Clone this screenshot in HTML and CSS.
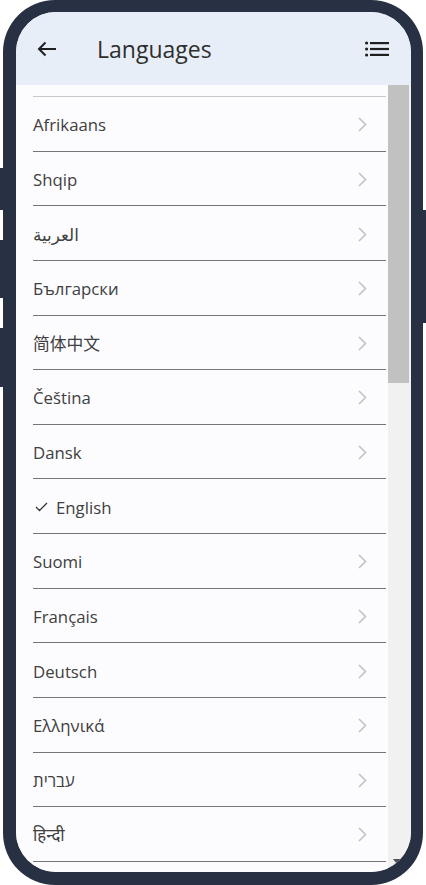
FILE: index.html
```html
<!DOCTYPE html>
<html lang="en">
<head>
<meta charset="utf-8">
<title>Languages</title>
<link rel="stylesheet" href="styles.css">
</head>
<body>
<div class="device">
  <span class="btn btn-l1"></span>
  <span class="btn btn-l2"></span>
  <span class="btn btn-l3"></span>
  <span class="btn btn-r1"></span>
  <div class="screen">
    <header class="topbar">
      <svg class="back" width="20" height="16" viewBox="0 0 20 16"><path d="M19 8H2M8.5 1.5L2 8l6.5 6.5" fill="none" stroke="#1f1f1f" stroke-width="2"/></svg>
      <h1 class="title">Languages</h1>
      <svg class="menu" width="24" height="16" viewBox="0 0 24 16"><g fill="#1f1f1f"><circle cx="1.6" cy="2" r="1.6"/><circle cx="1.6" cy="8" r="1.6"/><circle cx="1.6" cy="14" r="1.6"/><rect x="5" y="1" width="19" height="2.2"/><rect x="5" y="6.9" width="19" height="2.2"/><rect x="5" y="12.8" width="19" height="2.2"/></g></svg>
    </header>
    <div class="body">
      <div class="list">
        <div class="top-line"></div>
        <div class="item"><span class="label">Afrikaans</span><svg class="chev" width="9" height="15" viewBox="0 0 9 15"><polyline points="1,1 7.5,7.5 1,14" fill="none" stroke="#c2c2c2" stroke-width="1.6"/></svg></div>
        <div class="item"><span class="label">Shqip</span><svg class="chev" width="9" height="15" viewBox="0 0 9 15"><polyline points="1,1 7.5,7.5 1,14" fill="none" stroke="#c2c2c2" stroke-width="1.6"/></svg></div>
        <div class="item"><span class="label">العربية</span><svg class="chev" width="9" height="15" viewBox="0 0 9 15"><polyline points="1,1 7.5,7.5 1,14" fill="none" stroke="#c2c2c2" stroke-width="1.6"/></svg></div>
        <div class="item"><span class="label">Български</span><svg class="chev" width="9" height="15" viewBox="0 0 9 15"><polyline points="1,1 7.5,7.5 1,14" fill="none" stroke="#c2c2c2" stroke-width="1.6"/></svg></div>
        <div class="item"><span class="label">简体中文</span><svg class="chev" width="9" height="15" viewBox="0 0 9 15"><polyline points="1,1 7.5,7.5 1,14" fill="none" stroke="#c2c2c2" stroke-width="1.6"/></svg></div>
        <div class="item"><span class="label">Čeština</span><svg class="chev" width="9" height="15" viewBox="0 0 9 15"><polyline points="1,1 7.5,7.5 1,14" fill="none" stroke="#c2c2c2" stroke-width="1.6"/></svg></div>
        <div class="item"><span class="label">Dansk</span><svg class="chev" width="9" height="15" viewBox="0 0 9 15"><polyline points="1,1 7.5,7.5 1,14" fill="none" stroke="#c2c2c2" stroke-width="1.6"/></svg></div>
        <div class="item current"><svg class="check" width="13" height="10" viewBox="0 0 13 10"><polyline points="1,5 4.5,8.5 12,1" fill="none" stroke="#333" stroke-width="1.3"/></svg><span class="label">English</span></div>
        <div class="item"><span class="label">Suomi</span><svg class="chev" width="9" height="15" viewBox="0 0 9 15"><polyline points="1,1 7.5,7.5 1,14" fill="none" stroke="#c2c2c2" stroke-width="1.6"/></svg></div>
        <div class="item"><span class="label">Français</span><svg class="chev" width="9" height="15" viewBox="0 0 9 15"><polyline points="1,1 7.5,7.5 1,14" fill="none" stroke="#c2c2c2" stroke-width="1.6"/></svg></div>
        <div class="item"><span class="label">Deutsch</span><svg class="chev" width="9" height="15" viewBox="0 0 9 15"><polyline points="1,1 7.5,7.5 1,14" fill="none" stroke="#c2c2c2" stroke-width="1.6"/></svg></div>
        <div class="item"><span class="label">Ελληνικά</span><svg class="chev" width="9" height="15" viewBox="0 0 9 15"><polyline points="1,1 7.5,7.5 1,14" fill="none" stroke="#c2c2c2" stroke-width="1.6"/></svg></div>
        <div class="item"><span class="label">עברית</span><svg class="chev" width="9" height="15" viewBox="0 0 9 15"><polyline points="1,1 7.5,7.5 1,14" fill="none" stroke="#c2c2c2" stroke-width="1.6"/></svg></div>
        <div class="item"><span class="label">हिन्दी</span><svg class="chev" width="9" height="15" viewBox="0 0 9 15"><polyline points="1,1 7.5,7.5 1,14" fill="none" stroke="#c2c2c2" stroke-width="1.6"/></svg></div>
      </div>
      <div class="scrollbar">
        <div class="thumb"></div>
        <div class="track-fill"></div>
        <svg class="arrow-down" width="8" height="6" viewBox="0 0 8 6"><polygon points="0,0 8,0 4,5" fill="#505050"/></svg>
      </div>
    </div>
  </div>
</div>
</body>
</html>
```
FILE: styles.css
```css
html, body {
  margin: 0;
  padding: 0;
  background: #ffffff;
}

body {
  width: 426px;
  height: 885px;
  overflow: hidden;
  font-family: "Open Sans", "Noto Sans", "DejaVu Sans", "Noto Sans CJK SC", "Noto Sans Devanagari", sans-serif;
}

.device {
  position: relative;
  box-sizing: border-box;
  width: 420px;
  height: 885px;
  margin-left: 3px;
  border-style: solid;
  border-color: #283044;
  border-width: 12px 12px 13px 13px;
  border-radius: 52px;
  background: #283044;
}

.btn {
  position: absolute;
  width: 4px;
  background: #283044;
}
.btn-l1 { left: -16px; top: 156px; height: 42px; }
.btn-l2 { left: -16px; top: 228px; height: 58px; }
.btn-l3 { left: -16px; top: 316px; height: 59px; }
.btn-r1 { right: -15px; top: 198px; height: 113px; }

.screen {
  height: 100%;
  border-radius: 40px;
  overflow: hidden;
  background: #fcfcfe;
  display: flex;
  flex-direction: column;
}

.topbar {
  flex: 0 0 73px;
  background: #e8eef7;
  display: flex;
  align-items: center;
  padding: 0 22px 0 21px;
  box-sizing: border-box;
}

.back {
  flex: none;
  margin-top: 1px;
}

.title {
  flex: 1;
  margin: 0 0 0 40px;
  font-size: 23px;
  font-weight: 400;
  color: #2e2e2e;
  letter-spacing: 0;
}

.menu {
  flex: none;
  margin-top: 1px;
}

.body {
  flex: 1;
  display: flex;
  min-height: 0;
}

.list {
  flex: 1;
  padding-top: 11px;
  background: #fcfcfe;
}

.top-line {
  height: 1px;
  margin: 0 2px 0 17px;
  background: #c9c9cc;
}

.item {
  height: 54.64px;
  box-sizing: border-box;
  margin: 0 2px 0 17px;
  border-bottom: 1px solid #75757b;
  display: flex;
  align-items: center;
  padding-right: 19px;
  padding-top: 2px;
}

.label {
  flex: 1;
  font-size: 16.8px;
  color: #404040;
}

.current .label {
  margin-left: 8px;
}

.check {
  flex: none;
  margin-left: 2px;
}

.chev {
  flex: none;
}

.scrollbar {
  flex: 0 0 23px;
  background: #f1f1f1;
  display: flex;
  flex-direction: column;
  align-items: flex-start;
}

.thumb {
  width: 21px;
  height: 298px;
  background: #c1c1c1;
}

.track-fill {
  flex: 1;
}

.arrow-down {
  margin: 0 0 7px 5px;
}
```
